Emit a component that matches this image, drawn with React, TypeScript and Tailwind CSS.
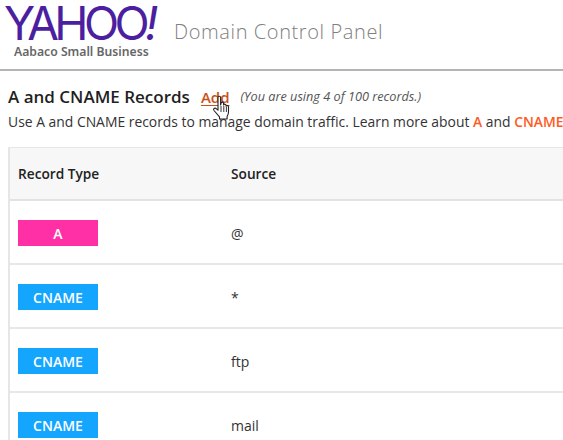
const rows = [
  { type: 'A', source: '@', color: 'bg-[#ff2fa6]' },
  { type: 'CNAME', source: '*', color: 'bg-[#14a5ff]' },
  { type: 'CNAME', source: 'ftp', color: 'bg-[#14a5ff]' },
  { type: 'CNAME', source: 'mail', color: 'bg-[#14a5ff]' },
];

function HandCursor() {
  return (
    <svg className="absolute left-[11px] top-[9px]" width="22" height="26" viewBox="0 0 22 26">
      <path
        d="M6 2.5c0-1.6 2.6-1.6 2.6 0V10l.5-2c.3-1.3 2.4-1.2 2.5.3V10c.4-1.2 2.4-1.1 2.5.4v.8c.5-1 2.3-.8 2.4.6V17c0 2-.7 3.2-1.4 4.5V24H7.5v-2.2L2 15.5c-1.2-1.5.7-3.2 2.2-1.9L6 15.2z"
        fill="#fff"
        stroke="#222"
        strokeWidth="1.1"
        strokeLinejoin="round"
      />
      <path d="M9 11v6M11.8 11v6M14.4 12v5" stroke="#222" strokeWidth="0.9" fill="none" />
    </svg>
  );
}

function Header() {
  return (
    <header className="flex h-[71px] items-start border-b-2 border-[#b4b4b4] pl-[4px]">
      <div className="flex w-[165px] shrink-0 flex-col pt-[3px]">
        <div className="font-['Inter',sans-serif] text-[46px] leading-[40px] font-normal tracking-[-4.6px] whitespace-nowrap text-[#4b1fa0]">
          YAHOO<span className="italic">!</span>
        </div>
        <div className="mt-[1px] pl-[10px] font-['Noto_Sans',sans-serif] text-[12.2px] leading-[16px] font-semibold text-[#666]">
          Aabaco Small Business
        </div>
      </div>
      <div className="pt-[18px] pl-[5px] text-[20px] leading-[28px] font-light tracking-[0.6px] whitespace-nowrap text-[#808080]">
        Domain Control Panel
      </div>
    </header>
  );
}

export default function App() {
  return (
    <div className="h-[440px] w-[563px] overflow-hidden bg-white font-['Open_Sans',sans-serif] text-[#2b2b2b]">
      <Header />
      <div className="pt-[15px] pl-[8px]">
        <div className="flex h-[22px] items-center whitespace-nowrap">
          <h1 className="text-[17px] font-semibold text-[#1f1f1f]">A and CNAME Records</h1>
          <a className="relative ml-[11px] text-[15px] font-semibold text-[#c8521c] underline underline-offset-2">
            Add
            <HandCursor />
          </a>
          <span className="ml-[11px] text-[12.7px] text-[#555] italic">(You are using 4 of 100 records.)</span>
        </div>
        <p className="mt-[2px] text-[13.9px] leading-[24px] whitespace-nowrap text-[#333]">
          Use A and CNAME records to manage domain traffic. Learn more about{' '}
          <span className="font-semibold text-[#ff5a1f]">A</span> and{' '}
          <span className="font-semibold text-[#ff5a1f]">CNAME</span>
        </p>
        <div className="mt-[13px] border-t border-l-2 border-[#e6e6e6]">
          <div className="flex h-[53px] items-center border-b-2 border-[#e2e2e2] bg-[#f7f7f7] pt-[2px] text-[13.7px] font-semibold text-[#222]">
            <div className="w-[221px] pl-[8px]">Record Type</div>
            <div>Source</div>
          </div>
          {rows.map((row) => (
            <div key={row.type + row.source} className="flex h-[64px] items-center border-b-2 border-[#e8e8e8] pt-[2px]">
              <div className="w-[221px] pl-[8px]">
                <span className={`flex h-[26px] w-[80px] items-center justify-center text-[14px] font-semibold text-white ${row.color}`}>
                  {row.type}
                </span>
              </div>
              <div className="text-[14px] text-[#333]">{row.source}</div>
            </div>
          ))}
        </div>
      </div>
    </div>
  );
}
